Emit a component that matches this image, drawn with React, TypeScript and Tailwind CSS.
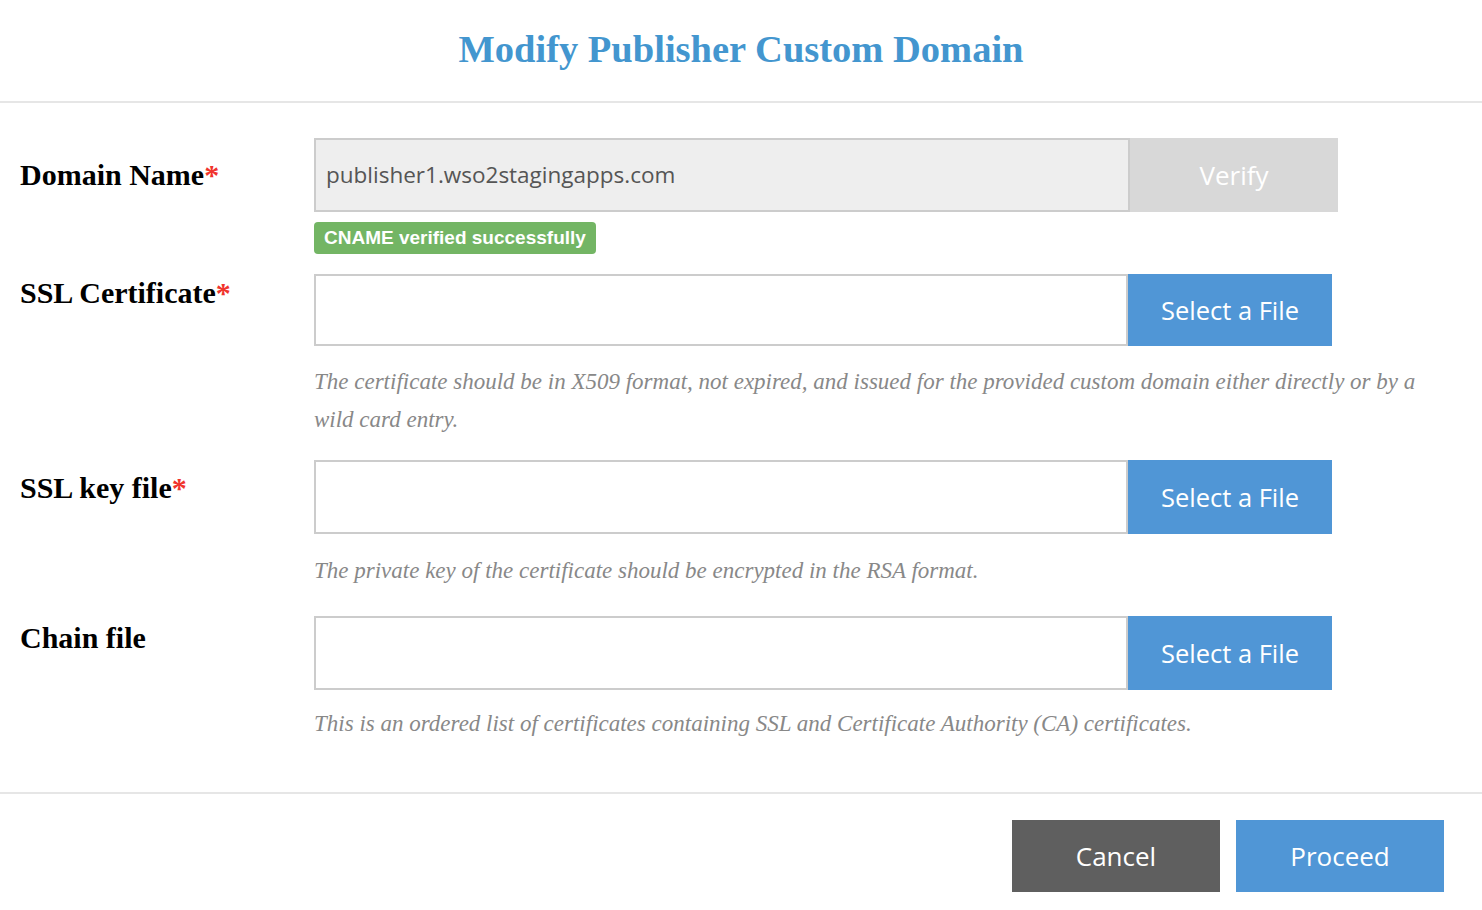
const serif = "font-['Liberation_Serif','Times_New_Roman',serif]";
const sans = "font-['Open_Sans','Noto_Sans',sans-serif]";

function Label({ text, required, offset }: { text: string; required?: boolean; offset: string }) {
  return (
    <div className={`w-[294px] shrink-0 ${offset}`}>
      <span className={`${serif} text-[30px] leading-none font-bold text-black`}>
        {text}
        {required && <span className="text-[#f0342c]">*</span>}
      </span>
    </div>
  );
}

function FileRow({
  label,
  required,
  offset,
  height,
  hint,
  hintClass,
}: {
  label: string;
  required?: boolean;
  offset: string;
  height: string;
  hint: string;
  hintClass: string;
}) {
  return (
    <div className="flex">
      <Label text={label} required={required} offset={offset} />
      <div className="flex flex-col">
        <div className={`flex ${height}`}>
          <div className="h-full w-[814px] border-2 border-[#cccccc] bg-white" />
          <button
            className={`h-full w-[204px] bg-[#5096d6] text-[25.5px] text-white ${sans}`}
          >
            Select a File
          </button>
        </div>
        <p className={`w-[1120px] text-[23px] text-[#888888] italic ${serif} ${hintClass}`}>
          {hint}
        </p>
      </div>
    </div>
  );
}

export default function App() {
  return (
    <div className="h-[910px] w-[1482px] bg-white">
      <header className="flex h-[103px] items-start justify-center border-b-2 border-[#e6e6e6]">
        <h1 className={`${serif} mt-[26px] text-[38.5px] leading-[46px] font-bold text-[#4396cf]`}>
          Modify Publisher Custom Domain
        </h1>
      </header>

      <div className="flex h-[689px] flex-col pt-[35px] pl-[20px]">
        <div className="flex">
          <Label text="Domain Name" required offset="pt-[22px]" />
          <div className="flex flex-col">
            <div className="flex h-[74px]">
              <div
                className={`flex h-full w-[816px] items-center border-2 border-[#cccccc] bg-[#eeeeee] pl-[10px] text-[22.5px] text-[#555555] ${sans}`}
              >
                publisher1.wso2stagingapps.com
              </div>
              <button
                className={`h-full w-[208px] bg-[#d8d8d8] text-[26px] text-white ${sans}`}
              >
                Verify
              </button>
            </div>
            <div className="mt-[10px] flex">
              <span className="flex h-[32px] items-center rounded-[4px] bg-[#73b564] px-[10px] font-['Liberation_Sans',Arial,sans-serif] text-[19px] font-bold text-white">
                CNAME verified successfully
              </span>
            </div>
          </div>
        </div>

        <div className="mt-[20px]">
          <FileRow
            label="SSL Certificate"
            required
            offset="pt-[4px]"
            height="h-[72px]"
            hint="The certificate should be in X509 format, not expired, and issued for the provided custom domain either directly or by a wild card entry."
            hintClass="mt-[17px] leading-[38px]"
          />
        </div>

        <div className="mt-[21px]">
          <FileRow
            label="SSL key file"
            required
            offset="pt-[13px]"
            height="h-[74px]"
            hint="The private key of the certificate should be encrypted in the RSA format."
            hintClass="mt-[20px] leading-[34px]"
          />
        </div>

        <div className="mt-[28px]">
          <FileRow
            label="Chain file"
            offset="pt-[7px]"
            height="h-[74px]"
            hint="This is an ordered list of certificates containing SSL and Certificate Authority (CA) certificates."
            hintClass="mt-[17px] leading-[34px]"
          />
        </div>
      </div>

      <footer className="flex justify-end gap-[16px] border-t-2 border-[#e6e6e6] pt-[26px] pr-[38px]">
        <button className={`h-[72px] w-[208px] bg-[#5f5f5f] text-[26px] text-white ${sans}`}>
          Cancel
        </button>
        <button className={`h-[72px] w-[208px] bg-[#5096d6] text-[26px] text-white ${sans}`}>
          Proceed
        </button>
      </footer>
    </div>
  );
}
